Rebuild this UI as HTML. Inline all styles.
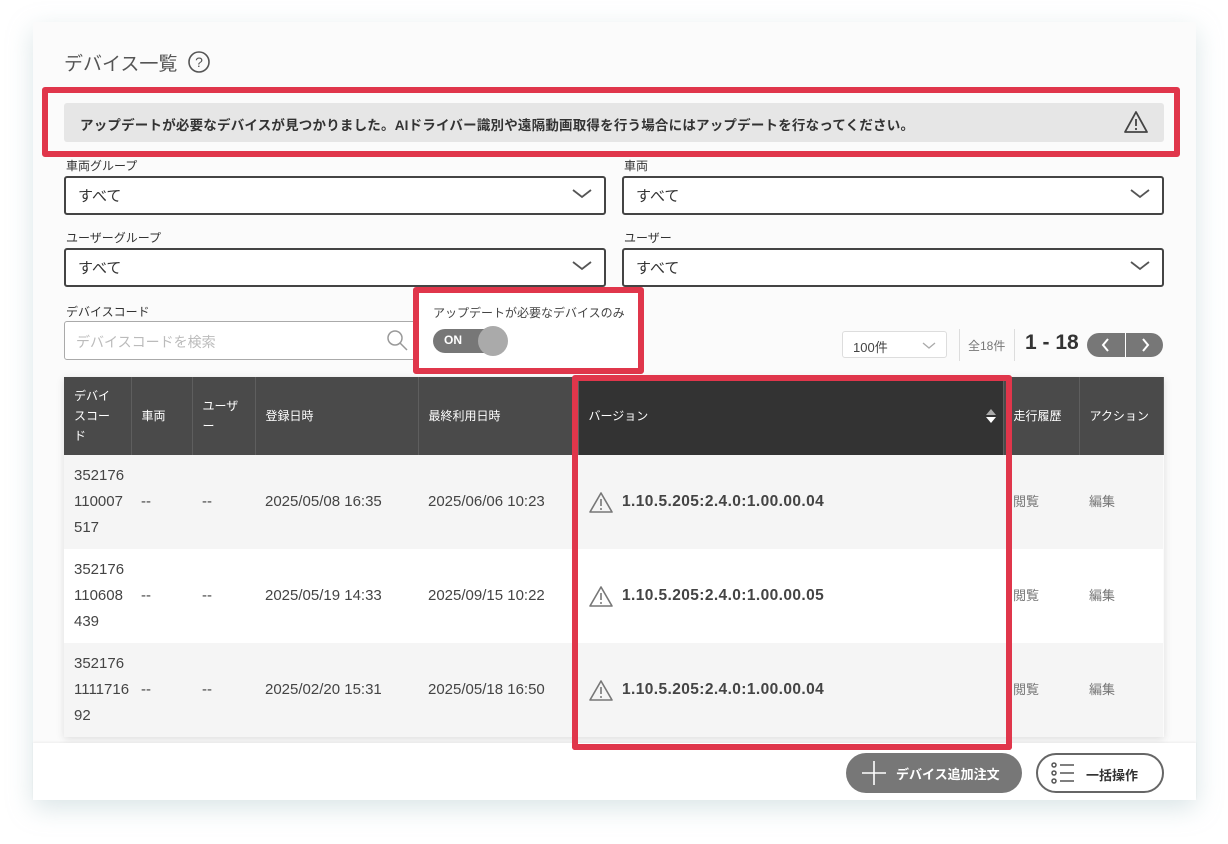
<!DOCTYPE html>
<html><head><meta charset="utf-8"><style>
*{box-sizing:border-box;margin:0;padding:0}
body{width:1228px;height:844px;background:#fff;font-family:"Liberation Sans","Noto Sans CJK JP",sans-serif;color:#333;position:relative;overflow:hidden}
.a{position:absolute}
.card{left:33px;top:22px;width:1163px;height:778px;background:#fbfbfb;box-shadow:0 8px 24px rgba(150,180,185,.35)}
.lbl{font-size:12px;color:#333}
.sel{border:2px solid #444;border-radius:3px;background:#fff;font-size:15px;padding:7px 12px;height:39px}
.chev{position:absolute;right:12px;top:10px}
.red{border:6px solid #e0364b;border-radius:3px}
table{border-collapse:collapse;font-size:15px;table-layout:fixed}
th{background:#4a4a4a;color:#fff;font-weight:normal;font-size:12px;text-align:left;padding:0 10px;height:78px;border-right:1px solid #5e5e5e;line-height:20px}
td{height:94px;padding:0 10px;color:#444;line-height:26px;overflow:hidden;white-space:nowrap}
tr.g td{background:#f5f5f5}
tr.w td{background:#fff}
.ver{font-weight:bold;font-size:15.5px;color:#444;display:flex;align-items:center;gap:8px;letter-spacing:.4px}
.gr{color:#777;font-size:13px}
</style></head><body>
<div class="a card"></div>
<div class="a" style="left:64px;top:49px;font-size:19px;color:#555">デバイス一覧</div>
<svg class="a" style="left:187px;top:50px" width="24" height="24" viewBox="0 0 24 24"><circle cx="12" cy="12" r="10" fill="none" stroke="#555" stroke-width="1.6"/><text x="12" y="17" font-size="14" text-anchor="middle" fill="#555" font-family="Liberation Sans">?</text></svg>

<div class="a" style="left:64px;top:103px;width:1100px;height:39px;background:#e6e6e6;border-radius:3px;font-size:13.5px;font-weight:bold;padding:11px 16px;color:#333;letter-spacing:.2px;white-space:nowrap">アップデートが必要なデバイスが見つかりました。AIドライバー識別や遠隔動画取得を行う場合にはアップデートを行なってください。</div>
<svg class="a" style="left:1123px;top:110px" width="26" height="24" viewBox="0 0 26 24"><path d="M13 2L24 22H2Z" fill="none" stroke="#444" stroke-width="1.8" stroke-linejoin="round"/><path d="M13 9v7" stroke="#444" stroke-width="1.8"/><circle cx="13" cy="19" r="1.1" fill="#444"/></svg>
<div class="a red" style="left:42px;top:87px;width:1138px;height:70px"></div>

<div class="a lbl" style="left:66px;top:157px">車両グループ</div>
<div class="a lbl" style="left:624px;top:157px">車両</div>
<div class="a sel" style="left:64px;top:176px;width:542px">すべて<svg class="chev" width="20" height="12"><path d="M1 2l9 7 9-7" fill="none" stroke="#555" stroke-width="1.8"/></svg></div>
<div class="a sel" style="left:622px;top:176px;width:542px">すべて<svg class="chev" width="20" height="12"><path d="M1 2l9 7 9-7" fill="none" stroke="#555" stroke-width="1.8"/></svg></div>
<div class="a lbl" style="left:66px;top:229px">ユーザーグループ</div>
<div class="a lbl" style="left:624px;top:229px">ユーザー</div>
<div class="a sel" style="left:64px;top:248px;width:542px">すべて<svg class="chev" width="20" height="12"><path d="M1 2l9 7 9-7" fill="none" stroke="#555" stroke-width="1.8"/></svg></div>
<div class="a sel" style="left:622px;top:248px;width:542px">すべて<svg class="chev" width="20" height="12"><path d="M1 2l9 7 9-7" fill="none" stroke="#555" stroke-width="1.8"/></svg></div>

<div class="a lbl" style="left:66px;top:303px">デバイスコード</div>
<div class="a" style="left:64px;top:321px;width:360px;height:39px;border:1.5px solid #aaa;border-radius:3px;background:#fff;font-size:14px;color:#bbb;padding:10px 11px">デバイスコードを検索</div>
<svg class="a" style="left:386px;top:329px" width="24" height="24"><circle cx="9" cy="9" r="7" fill="none" stroke="#999" stroke-width="1.5"/><path d="M14 14l7 7" stroke="#999" stroke-width="1.5"/></svg>

<div class="a" style="left:413px;top:287px;width:231px;height:87px;background:#fff"></div>
<div class="a red" style="left:413px;top:287px;width:231px;height:87px"></div>
<div class="a" style="left:433px;top:304px;font-size:12px;color:#444">アップデートが必要なデバイスのみ</div>
<div class="a" style="left:433px;top:329px;width:64px;height:24px;border-radius:12px;background:#777;color:#fff;font-size:12px;font-weight:bold;padding:4px 11px">ON</div>
<div class="a" style="left:478px;top:326px;width:30px;height:30px;border-radius:50%;background:#aaa"></div>

<div class="a" style="left:842px;top:331px;width:105px;height:27px;border:1.5px solid #ddd;border-radius:3px;background:#fff;font-size:13px;padding:5px 10px;color:#444">100件<svg class="a" style="right:10px;top:10px" width="14" height="8"><path d="M1 1l6 5 6-5" fill="none" stroke="#aaa" stroke-width="1.3"/></svg></div>
<div class="a" style="left:959px;top:329px;width:1px;height:32px;background:#ddd"></div>
<div class="a" style="left:968px;top:337px;font-size:12px;color:#777">全18件</div>
<div class="a" style="left:1014px;top:329px;width:1px;height:32px;background:#ddd"></div>
<div class="a" style="left:1025px;top:331px;font-size:21px;font-weight:bold;color:#333">1 - 18</div>
<div class="a" style="left:1087px;top:333px;width:76px;height:24px;border-radius:12px;background:#777"></div>
<div class="a" style="left:1125px;top:333px;width:1px;height:24px;background:#fff"></div>
<svg class="a" style="left:1100px;top:338px" width="12" height="14"><path d="M8 1L3 7l5 6" fill="none" stroke="#fff" stroke-width="2"/></svg>
<svg class="a" style="left:1139px;top:338px" width="12" height="14"><path d="M4 1l5 6-5 6" fill="none" stroke="#fff" stroke-width="2"/></svg>

<table class="a" style="left:64px;top:377px;width:1099px;box-shadow:0 2px 8px rgba(0,0,0,.12)">
<colgroup><col style="width:67px"><col style="width:61px"><col style="width:63px"><col style="width:163px"><col style="width:160px"><col style="width:425px"><col style="width:76px"><col style="width:84px"></colgroup>
<tr><th>デバイ<br>スコー<br>ド</th><th>車両</th><th>ユーザ<br>ー</th><th>登録日時</th><th>最終利用日時</th><th style="background:#333;position:relative">バージョン<svg style="position:absolute;right:6px;top:32px" width="12" height="14"><path d="M1 6l5-6 5 6z" fill="#aaa"/><path d="M1 8l5 6 5-6z" fill="#fff"/></svg></th><th>走行履歴</th><th>アクション</th></tr>
<tr class="g"><td>352176<br>110007<br>517</td><td>--</td><td>--</td><td>2025/05/08 16:35</td><td>2025/06/06 10:23</td><td><div class="ver"><svg width="26" height="22" viewBox="0 0 26 22"><path d="M13 2L24 21H2Z" fill="none" stroke="#777" stroke-width="1.6" stroke-linejoin="round"/><path d="M13 8v7" stroke="#777" stroke-width="1.6"/><circle cx="13" cy="18" r="1" fill="#777"/></svg>1.10.5.205:2.4.0:1.00.00.04</div></td><td class="gr">閲覧</td><td class="gr">編集</td></tr>
<tr class="w"><td>352176<br>110608<br>439</td><td>--</td><td>--</td><td>2025/05/19 14:33</td><td>2025/09/15 10:22</td><td><div class="ver"><svg width="26" height="22" viewBox="0 0 26 22"><path d="M13 2L24 21H2Z" fill="none" stroke="#777" stroke-width="1.6" stroke-linejoin="round"/><path d="M13 8v7" stroke="#777" stroke-width="1.6"/><circle cx="13" cy="18" r="1" fill="#777"/></svg>1.10.5.205:2.4.0:1.00.00.05</div></td><td class="gr">閲覧</td><td class="gr">編集</td></tr>
<tr class="g"><td>352176<br>1111716<br>92</td><td>--</td><td>--</td><td>2025/02/20 15:31</td><td>2025/05/18 16:50</td><td><div class="ver"><svg width="26" height="22" viewBox="0 0 26 22"><path d="M13 2L24 21H2Z" fill="none" stroke="#777" stroke-width="1.6" stroke-linejoin="round"/><path d="M13 8v7" stroke="#777" stroke-width="1.6"/><circle cx="13" cy="18" r="1" fill="#777"/></svg>1.10.5.205:2.4.0:1.00.00.04</div></td><td class="gr">閲覧</td><td class="gr">編集</td></tr>
</table>
<div class="a red" style="left:572px;top:375px;width:440px;height:375px"></div>

<div class="a" style="left:33px;top:743px;width:1163px;height:57px;background:#fff;box-shadow:0 -1px 2px rgba(0,0,0,.06)"></div>
<div class="a red" style="left:572px;top:738px;width:440px;height:12px;border-top:none;border-radius:0 0 3px 3px"></div>
<div class="a" style="left:846px;top:753px;width:176px;height:40px;border-radius:20px;background:#777;color:#fff;font-size:13px;font-weight:bold;padding:11px 0 0 50px">デバイス追加注文</div>
<svg class="a" style="left:861px;top:760px" width="26" height="26"><path d="M13 1v24M1 13h24" stroke="#fff" stroke-width="1.6"/></svg>
<div class="a" style="left:1036px;top:753px;width:128px;height:40px;border-radius:20px;border:2px solid #666;background:#fff;font-size:13px;font-weight:bold;padding:10px 0 0 48px;color:#333">一括操作</div>
<svg class="a" style="left:1050px;top:762px" width="28" height="22"><g fill="none" stroke="#555" stroke-width="1.5"><circle cx="4" cy="3" r="2"/><circle cx="4" cy="11" r="2"/><circle cx="4" cy="19" r="2"/><path d="M10 3h14M10 11h14M10 19h14"/></g></svg>
</body></html>
